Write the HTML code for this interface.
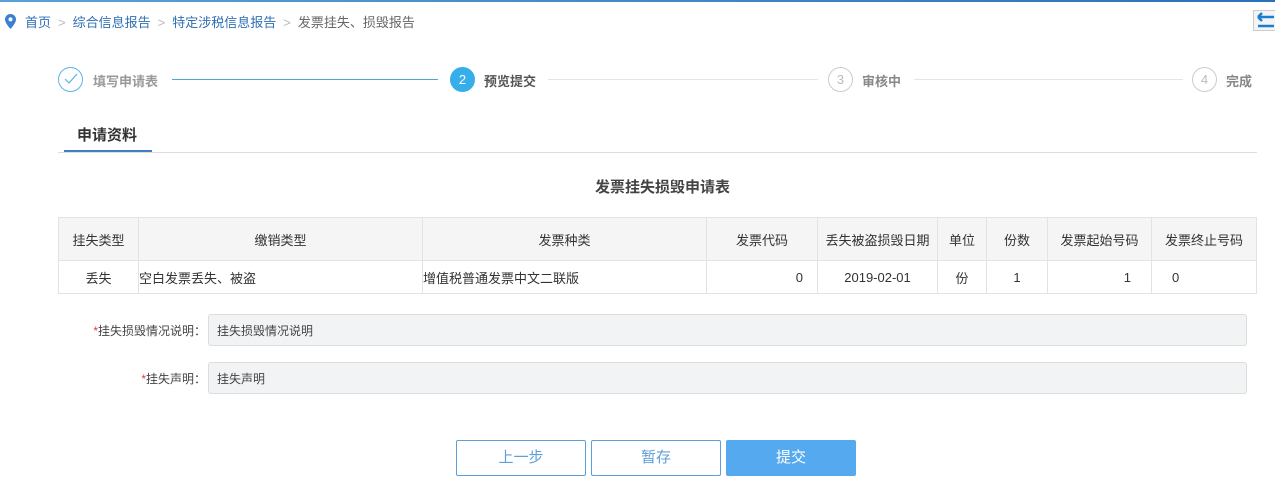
<!DOCTYPE html>
<html><head><meta charset="utf-8"><style>
*{margin:0;padding:0;box-sizing:border-box}
body{width:1275px;height:500px;background:#fff;font-family:"Liberation Sans","Noto Sans CJK SC",sans-serif;font-size:13px;color:#333;position:relative;overflow:hidden}
.a{position:absolute;white-space:nowrap}
.topbar{left:0;top:0;width:1275px;height:2px;background:linear-gradient(90deg,#5aa0d8,#2a72b8)}
.bc{top:14px;left:5px;font-size:13px;color:#666;line-height:18px}
.bc a{color:#2f6fb5;text-decoration:none}
.bc .s{color:#bbb;margin:0 7px}
.circ{width:25px;height:25px;border-radius:50%;border:1px solid #ccc;color:#bbb;text-align:center;line-height:23px;font-size:13px}
.st{font-size:13px;font-weight:bold;color:#555;top:71px}
table{border-collapse:collapse;position:absolute;left:58px;top:217px;width:1199px;font-size:13px}
td,th{border:1px solid #e3e3e3;text-align:center;font-weight:normal;color:#333}
th{background:#f5f5f5;height:43px}
td{height:33px}
.ta{background:#f2f3f5;border:1px solid #ddd;border-radius:3px;left:208px;width:1039px;height:32px;padding:7px 8px;color:#444;font-size:12px}
.lb{font-size:12px;color:#444;text-align:right;width:200px;left:6px}
.lb i{color:#e33;font-style:normal}
.btn{top:440px;width:130px;height:36px;border:1px solid #5d9fd9;border-radius:2px;text-align:center;line-height:34px;font-size:15px;color:#5d9fd9}
</style></head><body>
<div class="a topbar"></div>
<div class="a bc"><svg width="11" height="15" viewBox="0 0 11 15" style="vertical-align:-2px;margin-right:9px"><path d="M5.5 0C2.5 0 0 2.4 0 5.4 0 9.3 5.5 15 5.5 15S11 9.3 11 5.4C11 2.4 8.5 0 5.5 0z" fill="#3a7fd0"/><circle cx="5.5" cy="5.4" r="2" fill="#fff"/></svg><a>首页</a><span class="s">&gt;</span><a>综合信息报告</a><span class="s">&gt;</span><a>特定涉税信息报告</a><span class="s">&gt;</span>发票挂失、损毁报告</div>
<div class="a" style="left:1253px;top:10px;width:24px;height:21px;border:1px solid #ccc;background:#f4f4f4"><svg width="22" height="20" viewBox="0 0 22 20"><path d="M4 6h16M4 6l4-4M4 6l4 4" stroke="#1a7fd0" stroke-width="2.5" fill="none"/><path d="M4 15h16" stroke="#1a7fd0" stroke-width="2.5"/></svg></div>

<div class="a circ" style="left:58px;top:67px;border-color:#5ab4e6;color:#5ab4e6"><svg width="14" height="12" viewBox="0 0 14 12" style="margin-top:5px"><path d="M1 6l4 4 8-9" stroke="#5ab4e6" stroke-width="1.2" fill="none"/></svg></div>
<div class="a st" style="left:93px;color:#999">填写申请表</div>
<div class="a" style="left:172px;top:79px;width:266px;height:1px;background:#4aa8dc"></div>
<div class="a circ" style="left:450px;top:67px;background:#36aeea;border-color:#36aeea;color:#fff">2</div>
<div class="a st" style="left:484px">预览提交</div>
<div class="a" style="left:548px;top:79px;width:270px;height:1px;background:#e5e5e5"></div>
<div class="a circ" style="left:828px;top:67px">3</div>
<div class="a st" style="left:862px;color:#888">审核中</div>
<div class="a" style="left:914px;top:79px;width:269px;height:1px;background:#e5e5e5"></div>
<div class="a circ" style="left:1192px;top:67px">4</div>
<div class="a st" style="left:1226px;color:#888">完成</div>

<div class="a" style="left:77px;top:124px;font-size:15px;font-weight:bold;color:#333">申请资料</div>
<div class="a" style="left:58px;top:152px;width:1199px;height:1px;background:#ddd"></div>
<div class="a" style="left:64px;top:150px;width:88px;height:2px;background:#3f7fc4"></div>

<div class="a" style="left:0;width:1325px;text-align:center;top:176px;font-size:15px;font-weight:bold;color:#444">发票挂失损毁申请表</div>

<table>
<tr><th style="width:80px">挂失类型</th><th style="width:284px">缴销类型</th><th style="width:284px">发票种类</th><th style="width:111px">发票代码</th><th style="width:120px">丢失被盗损毁日期</th><th style="width:49px">单位</th><th style="width:61px">份数</th><th style="width:104px">发票起始号码</th><th>发票终止号码</th></tr>
<tr><td>丢失</td><td style="text-align:left">空白发票丢失、被盗</td><td style="text-align:left">增值税普通发票中文二联版</td><td style="text-align:right;padding-right:14px">0</td><td>2019-02-01</td><td>份</td><td>1</td><td style="text-align:right;padding-right:20px">1</td><td style="text-align:left;padding-left:20px">0</td></tr>
</table>

<div class="a lb" style="top:322px"><i>*</i>挂失损毁情况说明：</div>
<div class="a ta" style="top:314px">挂失损毁情况说明</div>
<div class="a lb" style="top:370px"><i>*</i>挂失声明：</div>
<div class="a ta" style="top:362px">挂失声明</div>

<div class="a btn" style="left:456px">上一步</div>
<div class="a btn" style="left:591px">暂存</div>
<div class="a btn" style="left:726px;background:#55a9ef;border-color:#55a9ef;color:#fff">提交</div>
</body></html>
